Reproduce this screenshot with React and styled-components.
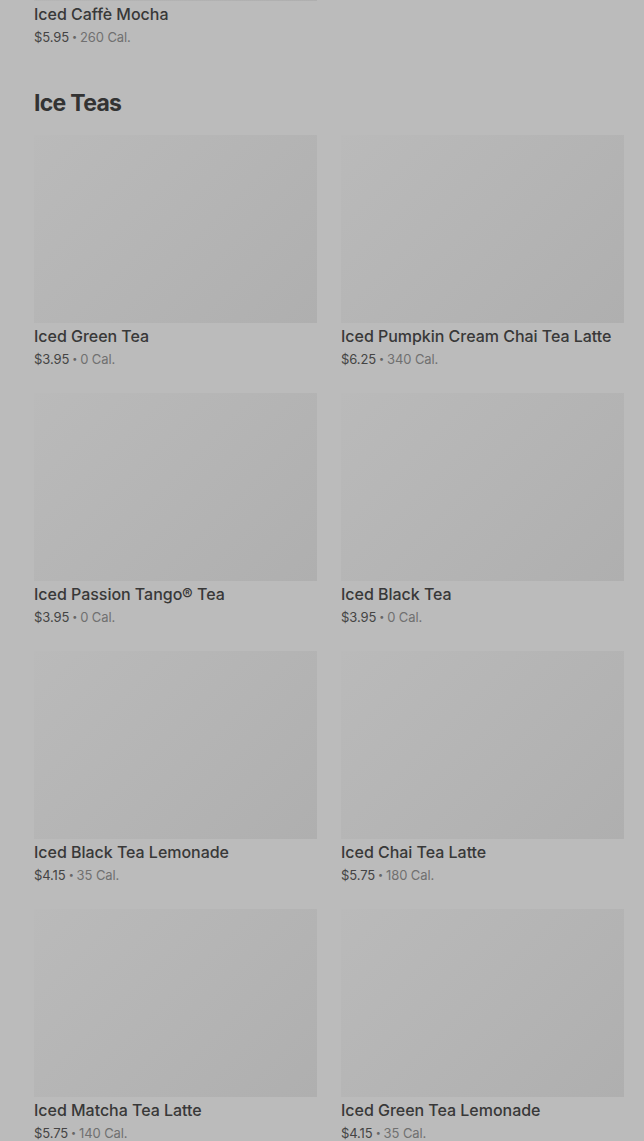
import styled, { createGlobalStyle } from 'styled-components'

const GlobalStyle = createGlobalStyle`
  html, body {
    margin: 0;
    padding: 0;
    background: #bbbbbb;
    overflow: hidden;
  }
  body {
    font-family: Inter, "Noto Sans", sans-serif;
    -webkit-font-smoothing: antialiased;
  }
`

const previous = [{ name: 'Iced Caffè Mocha', price: '$5.95', cal: '260 Cal.' }]

const iceTeas = [
  { name: 'Iced Green Tea', price: '$3.95', cal: '0 Cal.' },
  { name: 'Iced Pumpkin Cream Chai Tea Latte', price: '$6.25', cal: '340 Cal.' },
  { name: 'Iced Passion Tango® Tea', price: '$3.95', cal: '0 Cal.' },
  { name: 'Iced Black Tea', price: '$3.95', cal: '0 Cal.' },
  { name: 'Iced Black Tea Lemonade', price: '$4.15', cal: '35 Cal.' },
  { name: 'Iced Chai Tea Latte', price: '$5.75', cal: '180 Cal.' },
  { name: 'Iced Matcha Tea Latte', price: '$5.75', cal: '140 Cal.' },
  { name: 'Iced Green Tea Lemonade', price: '$4.15', cal: '35 Cal.' },
]

const Product = ({ item }) => (
  <Card>
    <Thumb />
    <Name>{item.name}</Name>
    <Meta>
      <Price>{item.price}</Price>
      <Dot>•</Dot>
      <Cal>{item.cal}</Cal>
    </Meta>
  </Card>
)

const App = () => (
  <>
    <GlobalStyle />
    <Page>
      <Section>
        <Grid>
          {previous.map((item) => (
            <Product key={item.name} item={item} />
          ))}
        </Grid>
      </Section>
      <Section>
        <Heading>Ice Teas</Heading>
        <Grid>
          {iceTeas.map((item) => (
            <Product key={item.name} item={item} />
          ))}
        </Grid>
      </Section>
    </Page>
  </>
)

export default App

// the list is scrolled so only the bottom of the previous card shows
const Page = styled.main`
  margin-top: -187px;
  padding: 0 20px 0 34px;
  display: flex;
  flex-direction: column;
  gap: 39px;
`

const Section = styled.section`
  display: flex;
  flex-direction: column;
`

const Heading = styled.h2`
  margin: 0 0 16px;
  font-size: 23px;
  line-height: 32px;
  font-weight: 650;
  letter-spacing: -0.7px;
  color: #333333;
`

const Grid = styled.div`
  display: grid;
  grid-template-columns: 283px 283px;
  column-gap: 24px;
  row-gap: 23px;
`

const Card = styled.article`
  display: flex;
  flex-direction: column;
`

const Thumb = styled.div`
  height: 188px;
  background: linear-gradient(135deg, #bababa 0%, #b4b4b4 55%, #afafaf 100%);
`

const Name = styled.h3`
  margin: 1px 0 0;
  font-size: 16px;
  line-height: 24px;
  font-weight: 450;
  letter-spacing: -0.03px;
  color: #383838;
  white-space: nowrap;
`

const Meta = styled.p`
  margin: 0;
  font-size: 13px;
  line-height: 22px;
  letter-spacing: -0.1px;
  display: flex;
  align-items: center;
  gap: 3px;
`

const Price = styled.span`
  color: #444444;
`

const Dot = styled.span`
  color: #666666;
  font-size: 9px;
`

const Cal = styled.span`
  color: #707070;
`
